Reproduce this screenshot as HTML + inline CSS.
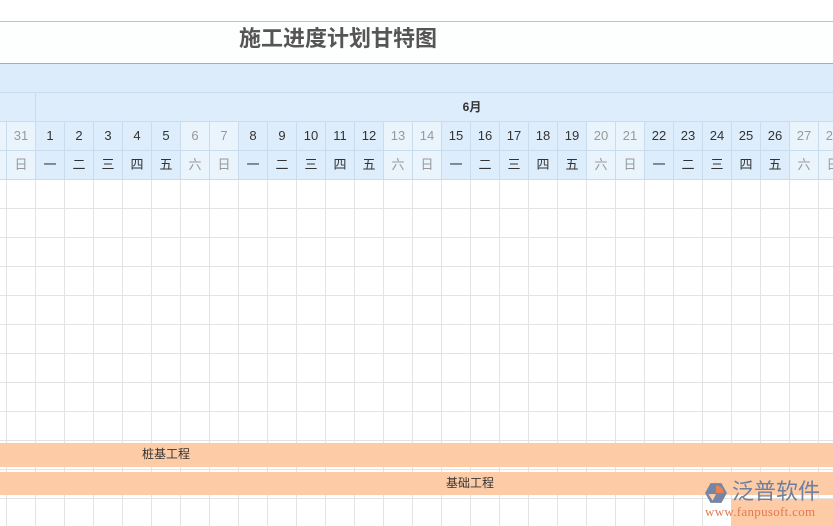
<!DOCTYPE html>
<html><head><meta charset="utf-8"><style>
*{margin:0;padding:0;box-sizing:border-box}
body{width:833px;height:526px;overflow:hidden;background:#fff;position:relative;font-family:"Liberation Sans","Noto Sans CJK SC",sans-serif}
.abs{position:absolute}
.row{position:absolute;left:0;display:flex;height:29px;white-space:nowrap}
.row div{flex:0 0 29px;width:29px;height:29px;border-right:1px solid #c8dcee;border-bottom:1px solid #c8dcee;text-align:center;line-height:28px;font-size:13px;color:#333;background:#deedfb}
.row div.w{background:#eaf4fd;color:#999}
.row div.f{flex:0 0 7px;width:7px;background:#eaf4fd}
.bar{position:absolute;left:0;background:#fdcca7;font-size:12px;color:#333;line-height:23px}
</style></head><body>
<div class="abs" style="left:0;top:21px;width:833px;height:1px;background:#aec6dc"></div>
<div class="abs" style="left:0;top:22px;width:833px;height:41px;background:#fdfefe"></div>
<div class="abs" style="left:239px;top:25px;font-size:22px;font-weight:bold;color:#555;line-height:28px">施工进度计划甘特图</div>
<div class="abs" style="left:0;top:63px;width:833px;height:30px;background:#dcecfa;border-top:1px solid #88b4d8;border-bottom:1px solid #c8dcee"></div>
<div class="abs" style="left:0;top:93px;width:833px;height:29px;background:#deedfb;border-bottom:1px solid #c8dcee"></div>
<div class="abs" style="left:35px;top:93px;width:1px;height:29px;background:#c8dcee"></div>
<div class="abs" style="left:461px;top:93px;width:22px;text-align:center;line-height:29px;font-size:12px;font-weight:bold;color:#333">6月</div>
<div class="row" style="top:122px">
<div class="f"></div><div class="w">31</div><div>1</div><div>2</div><div>3</div><div>4</div><div>5</div><div class="w">6</div><div class="w">7</div><div>8</div><div>9</div><div>10</div><div>11</div><div>12</div><div class="w">13</div><div class="w">14</div><div>15</div><div>16</div><div>17</div><div>18</div><div>19</div><div class="w">20</div><div class="w">21</div><div>22</div><div>23</div><div>24</div><div>25</div><div>26</div><div class="w">27</div><div class="w">28</div>
</div>
<div class="row" style="top:151px">
<div class="f"></div><div class="w">日</div><div>一</div><div>二</div><div>三</div><div>四</div><div>五</div><div class="w">六</div><div class="w">日</div><div>一</div><div>二</div><div>三</div><div>四</div><div>五</div><div class="w">六</div><div class="w">日</div><div>一</div><div>二</div><div>三</div><div>四</div><div>五</div><div class="w">六</div><div class="w">日</div><div>一</div><div>二</div><div>三</div><div>四</div><div>五</div><div class="w">六</div><div class="w">日</div>
</div>
<div class="abs" style="left:0;top:180px;width:833px;height:346px;background-image:linear-gradient(to right,#e3e3e3 1px,transparent 1px),linear-gradient(to bottom,transparent 28px,#e3e3e3 28px);background-size:29px 29px;background-position:6px 0,0 0"></div>
<div class="bar" style="top:443px;width:833px;height:24px"><span style="position:absolute;left:142px">桩基工程</span></div>
<div class="bar" style="top:472px;width:833px;height:23px"><span style="position:absolute;left:446px">基础工程</span></div>
<div class="bar" style="top:499px;left:731px;width:102px;height:27px"></div>
<div class="abs" style="left:704px;top:481px;width:24px;height:24px">
<svg width="24" height="24" viewBox="0 0 22 22"><path d="M6 2 L16 2 L21 11 L16 20 L6 20 L1 11Z" fill="#7585a5"/><path d="M11 4 A7 7 0 0 1 18 11 L11 11Z" fill="#e8834f"/><path d="M4 12 L11 12 L8 18Z" fill="#fdcca7"/></svg></div>
<div class="abs" style="left:732px;top:478px;font-size:22px;color:#6f7f9d;letter-spacing:0px;line-height:28px">泛普软件</div>
<div class="abs" style="left:705px;top:504px;font-size:13px;color:#e07a50;font-family:'Liberation Serif',serif;line-height:15px;letter-spacing:0.3px">www.fanpusoft.com</div>
</body></html>
